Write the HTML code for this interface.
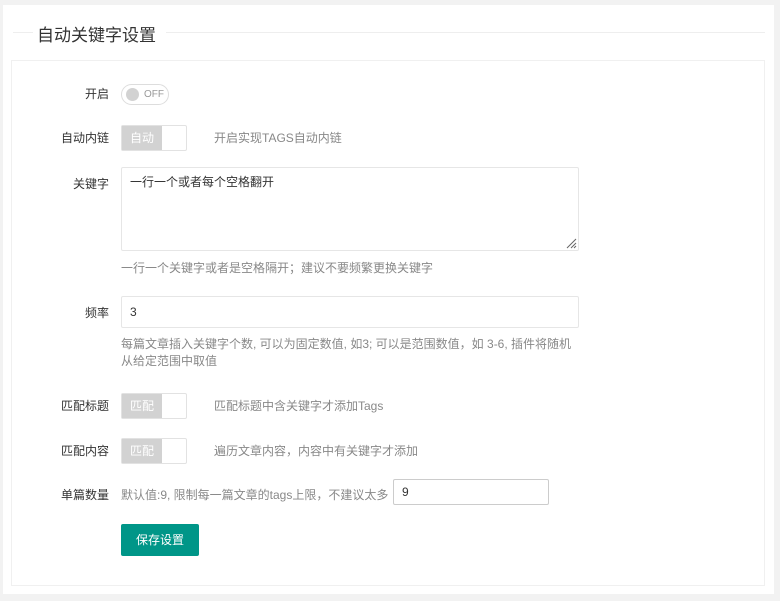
<!DOCTYPE html>
<html><head><meta charset="utf-8">
<style>
*{box-sizing:border-box;margin:0;padding:0}
body{width:780px;height:601px;background:#f2f2f2;font-family:"Liberation Sans","Noto Sans CJK SC",sans-serif;font-size:12px;color:#333;position:relative;overflow:hidden}
.card{position:absolute;left:3px;top:5px;width:771px;height:589px;background:#fff}
.line{position:absolute;top:32px;height:1px;background:#eee}
.title{position:absolute;left:37px;top:21px;font-size:17px;color:#333;background:#fff;padding:0 10px 0 0}
.panel{position:absolute;left:11px;top:60px;width:754px;height:526px;border:1px solid #f0f0f0}
.lbl{position:absolute;right:671px;font-size:12px;color:#333;white-space:nowrap}
.abs{position:absolute}
.tip{position:absolute;color:#888;font-size:12px;white-space:nowrap}
.input{position:absolute;border:1px solid #e6e6e6;border-radius:2px;background:#fff;padding-left:8px;font-size:12px;color:#333}
.sw{position:absolute;left:121px;width:66px;height:26px;border:1px solid #e2e2e2;border-radius:2px;background:#fff}
.sw span{position:absolute;left:0;top:0;width:40px;height:24px;background:#d2d2d2;color:#fff;font-size:12px;text-align:center;line-height:24px}
</style></head><body>
<div class="card"></div>
<div class="line" style="left:13px;width:20px"></div>
<div class="line" style="left:160px;width:605px"></div>
<div class="title">自动关键字设置</div>
<div class="panel"></div>

<div class="lbl" style="top:85px">开启</div>
<div class="abs" style="left:121px;top:84px;width:48px;height:21px;border:1px solid #ddd;border-radius:11px;background:#fff">
 <div class="abs" style="left:4px;top:3px;width:13px;height:13px;border-radius:50%;background:#d2d2d2"></div>
 <div class="abs" style="left:22px;top:4px;font-size:10px;color:#999">OFF</div>
</div>

<div class="lbl" style="top:129px">自动内链</div>
<div class="sw" style="top:125px"><span>自动</span></div>
<div class="tip" style="left:214px;top:129px">开启实现TAGS自动内链</div>

<div class="lbl" style="top:175px">关键字</div>
<div class="input" style="left:121px;top:167px;width:458px;height:84px;padding-top:5px">一行一个或者每个空格翻开
<svg class="abs" style="right:1px;bottom:1px" width="12" height="12"><path d="M11 2L2 11M11 6L6 11M11 9L9 11" stroke="#666" stroke-width="1"/></svg></div>
<div class="tip" style="left:121px;top:259px">一行一个关键字或者是空格隔开；建议不要频繁更换关键字</div>

<div class="lbl" style="top:304px">频率</div>
<div class="input" style="left:121px;top:296px;width:458px;height:32px;line-height:30px">3</div>
<div class="tip" style="left:121px;top:336px;line-height:17px">每篇文章插入关键字个数, 可以为固定数值, 如3; 可以是范围数值，如 3-6, 插件将随机<br>从给定范围中取值</div>

<div class="lbl" style="top:397px">匹配标题</div>
<div class="sw" style="top:393px"><span>匹配</span></div>
<div class="tip" style="left:214px;top:397px">匹配标题中含关键字才添加Tags</div>

<div class="lbl" style="top:442px">匹配内容</div>
<div class="sw" style="top:438px"><span>匹配</span></div>
<div class="tip" style="left:214px;top:442px">遍历文章内容，内容中有关键字才添加</div>

<div class="lbl" style="top:486px">单篇数量</div>
<div class="tip" style="left:121px;top:486px">默认值:9, 限制每一篇文章的tags上限，不建议太多</div>
<div class="input" style="left:393px;top:479px;width:156px;height:26px;line-height:24px;border-color:#ccc">9</div>

<div class="abs" style="left:121px;top:524px;width:78px;height:32px;background:#009688;color:#fff;font-size:12px;text-align:center;line-height:32px;border-radius:2px">保存设置</div>
</body></html>
